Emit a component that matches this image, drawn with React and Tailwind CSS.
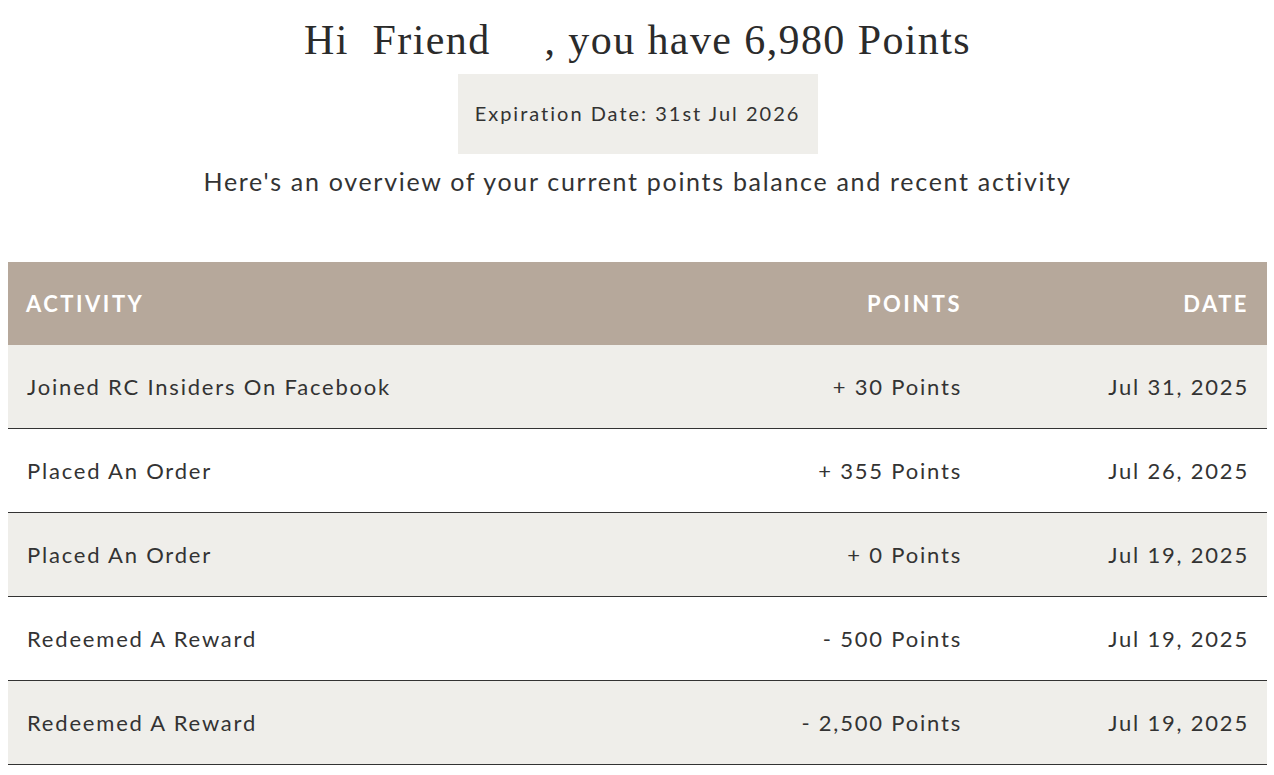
import React from 'react';

const rows = [
  { activity: 'Joined RC Insiders On Facebook', points: '+ 30 Points', date: 'Jul 31, 2025' },
  { activity: 'Placed An Order', points: '+ 355 Points', date: 'Jul 26, 2025' },
  { activity: 'Placed An Order', points: '+ 0 Points', date: 'Jul 19, 2025' },
  { activity: 'Redeemed A Reward', points: '- 500 Points', date: 'Jul 19, 2025' },
  { activity: 'Redeemed A Reward', points: '- 2,500 Points', date: 'Jul 19, 2025' },
];

const App = () => {
  return (
    <div className="min-h-screen bg-white text-[#333] font-['Lato',sans-serif] pt-[16px] pl-[8px] pr-[7px]">
      {/* Greeting */}
      <div className="flex flex-col items-center">
        <h1 className="font-['Liberation_Serif',serif] text-[42px] leading-[48px] tracking-[1.4px] text-[#2b2b2b] whitespace-pre">
          Hi  Friend<span className="inline-block w-[54px]"></span>, you have 6,980 Points
        </h1>
        <div className="mt-[10px] w-[360px] h-[80px] bg-[#efeeea] flex items-center justify-center text-[20px] tracking-[2px] pb-[2px]">
          Expiration Date: 31st Jul 2026
        </div>
        <p className="mt-[9px] text-[25px] leading-[36px] tracking-[1.7px]">
          Here's an overview of your current points balance and recent activity
        </p>
      </div>

      {/* Activity table */}
      <div className="mt-[63px]">
        <div className="grid grid-cols-[1fr_320px_288px] h-[83px] items-center bg-[#b6a89b] text-white font-bold text-[22px] tracking-[2.5px] uppercase">
          <div className="pl-[18px]">Activity</div>
          <div className="pr-[17px] text-right">Points</div>
          <div className="pr-[18px] text-right">Date</div>
        </div>
        {rows.map((r, i) => (
          <div
            key={i}
            className={`grid grid-cols-[1fr_320px_288px] h-[84px] items-center border-b border-[#333] text-[22px] tracking-[1.8px] ${i % 2 === 0 ? 'bg-[#efeeea]' : 'bg-white'}`}
          >
            <div className="pl-[19px]">{r.activity}</div>
            <div className="pr-[17px] text-right">{r.points}</div>
            <div className="pr-[18px] text-right">{r.date}</div>
          </div>
        ))}
      </div>
    </div>
  );
};

export default App;
